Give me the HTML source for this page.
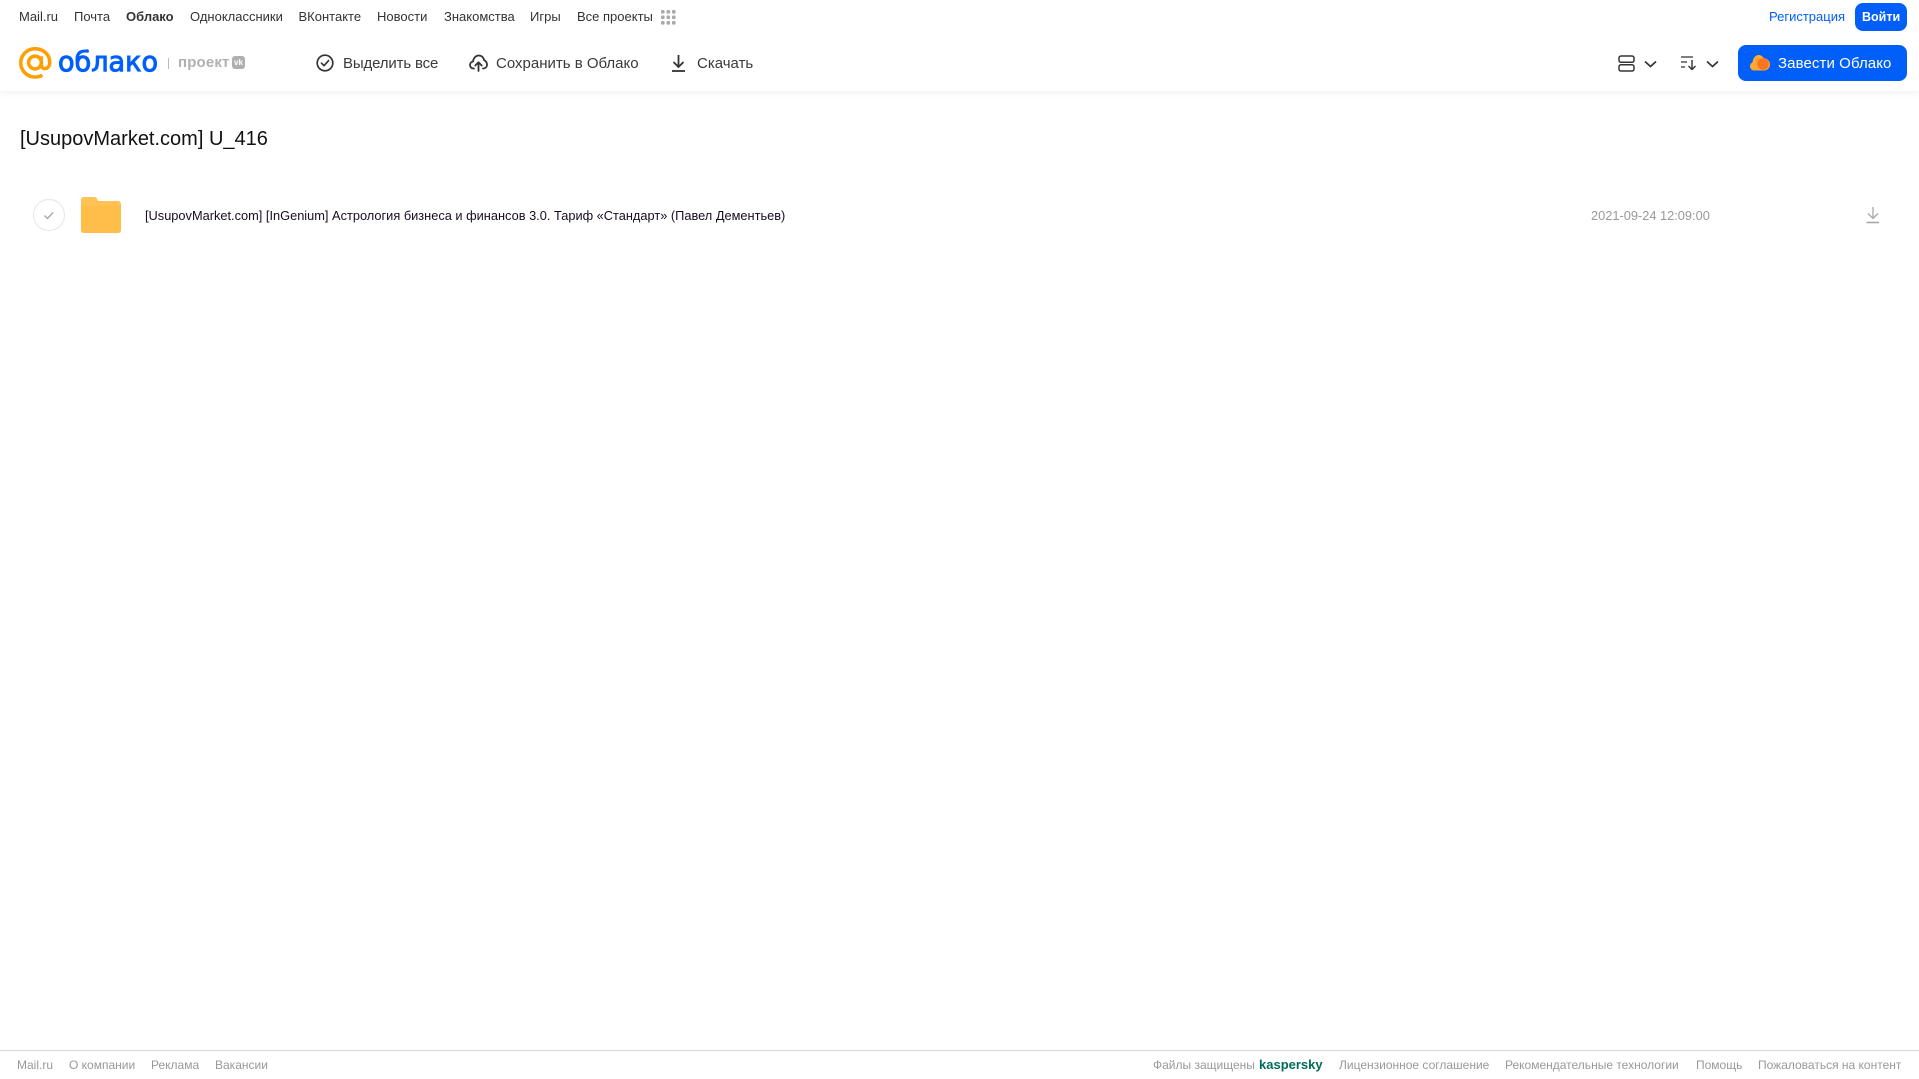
<!DOCTYPE html>
<html lang="ru"><head><meta charset="utf-8"><title>Облако</title>
<style>
html,body{margin:0;padding:0;background:#fff;width:1919px;height:1079px;overflow:hidden}
body{position:relative;font-family:"Liberation Sans","Noto Sans CJK SC",sans-serif}
.t{position:absolute;white-space:nowrap;line-height:20px;height:20px}
.n{top:7px;font-size:13px;color:#333}
.a{top:54px;font-size:15px;color:#3a3a3a}
.f{top:1055px;font-size:12px;color:#999}
svg{position:absolute;overflow:visible}
#hdr{position:absolute;left:0;top:0;width:1919px;height:91px;background:#fff;box-shadow:0 1px 8px rgba(0,0,0,.07)}
.btn{position:absolute;background:#005ff9;border-radius:8px}
</style></head><body>
<div id="hdr"></div>

<span class="t n" style="left:19px">Mail.ru</span>
<span class="t n" style="left:74px">Почта</span>
<span class="t n" style="left:126px;font-weight:700">Облако</span>
<span class="t n" style="left:190px">Одноклассники</span>
<span class="t n" style="left:298.500px">ВКонтакте</span>
<span class="t n" style="left:377px">Новости</span>
<span class="t n" style="left:444px">Знакомства</span>
<span class="t n" style="left:530px">Игры</span>
<span class="t n" style="left:577px">Все проекты</span>
<svg style="left:661px;top:10px" width="15" height="15" fill="#aaa"><rect x="0" y="0" width="3.6" height="3.6" rx="1"/><rect x="5.5" y="0" width="3.6" height="3.6" rx="1"/><rect x="11" y="0" width="3.6" height="3.6" rx="1"/><rect x="0" y="5.5" width="3.6" height="3.6" rx="1"/><rect x="5.5" y="5.5" width="3.6" height="3.6" rx="1"/><rect x="11" y="5.5" width="3.6" height="3.6" rx="1"/><rect x="0" y="11" width="3.6" height="3.6" rx="1"/><rect x="5.5" y="11" width="3.6" height="3.6" rx="1"/><rect x="11" y="11" width="3.6" height="3.6" rx="1"/></svg>

<span class="t n" style="left:1769px;color:#005ff9">Регистрация</span>
<div class="btn" style="left:1855px;top:3px;width:52px;height:28px"></div>
<span class="t n" style="left:1862px;color:#fff;font-weight:700;font-size:12.5px">Войти</span>

<!-- logo -->
<svg style="left:19px;top:47px" width="33" height="32" viewBox="0 0 34 33" fill="none" stroke="#ff9e00" stroke-width="3.6"><circle cx="16.5" cy="16" r="6.6"/><path d="M23 9.500v8.500c0 3 1.800 4.300 3.700 4.300 2.600 0 5-2.400 5-6.600C31.700 7.600 25 1.800 16.500 1.800 8.300 1.800 1.800 8.300 1.800 16.300c0 8.200 6.500 14.700 14.700 14.700 2.900 0 5.400-.7 7.600-2"/></svg>
<svg style="left:56px;top:42px" width="106" height="36"><text x="2" y="29" font-family="DejaVu Sans,sans-serif" font-size="28" fill="#005ff9" stroke="#005ff9" stroke-width="1" textLength="100" lengthAdjust="spacingAndGlyphs">облако</text></svg>
<div style="position:absolute;left:168px;top:58px;width:1px;height:11px;background:#bbb"></div>
<span class="t" style="left:178px;top:53px;font-size:15px;font-weight:700;color:#b0b0b0;letter-spacing:.15px">проект</span>
<div style="position:absolute;left:232px;top:56px;width:13px;height:13px;border-radius:3px;background:#b0b0b0;color:#fff;font-size:8px;font-weight:700;line-height:13px;text-align:center">vk</div>

<!-- actions -->
<svg style="left:316px;top:54px" width="18" height="18" fill="none" stroke="#333" stroke-width="1.7"><circle cx="9" cy="9" r="7.800"/><path d="M5.500 9.200l2.500 2.500 4.500-5" stroke-linecap="round" stroke-linejoin="round"/></svg>
<span class="t a" style="left:343px;letter-spacing:-.15px">Выделить все</span>
<svg style="left:469px;top:54px" width="19" height="18" fill="none" stroke="#333" stroke-width="1.800" stroke-linecap="round" stroke-linejoin="round"><path d="M5 14.500H4.500C2.500 14.500 1 13 1 11c0-1.800 1.300-3.200 3-3.500C4.500 4 6.800 1.500 9.700 1.500c2.800 0 5 2 5.500 4.800 1.600.4 2.800 2.400 2.800 4.400 0 2.200-1.600 3.800-3.800 3.800H14"/><path d="M9.500 17V9M6.300 11.500l3.200-3.200 3.200 3.200"/></svg>
<span class="t a" style="left:496px">Сохранить в Облако</span>
<svg style="left:671px;top:54px" width="15" height="18" fill="none" stroke="#333" stroke-width="1.800"><path d="M7.500 1v11.500M2.500 8l5 5 5-5"/><path d="M1 17h13"/></svg>
<span class="t a" style="left:697px">Скачать</span>

<!-- right controls -->
<svg style="left:1618px;top:55px" width="17" height="17" fill="none" stroke="#333" stroke-width="1.500"><rect x="1" y="1" width="15" height="6.300" rx="2"/><rect x="1" y="9.700" width="15" height="6.300" rx="2"/></svg>
<svg style="left:1643.500px;top:60px" width="13" height="8" fill="none" stroke="#333" stroke-width="1.700"><path d="M1 1.500l5.500 5 5.500-5"/></svg>
<svg style="left:1681px;top:55px" width="16" height="16" fill="none" stroke="#333" stroke-width="1.200"><path d="M0 2h12M0 7h6M0 12h4"/><path d="M11 5v9.500M7.500 11l3.500 3.500 3.500-3.500" stroke-width="1.400"/></svg>
<svg style="left:1705.500px;top:60px" width="13" height="8" fill="none" stroke="#333" stroke-width="1.700"><path d="M1 1.500l5.500 5 5.500-5"/></svg>
<div class="btn" style="left:1738px;top:45px;width:169px;height:36px"></div>
<svg style="left:1750px;top:54px" width="20" height="17"><path d="M4 16.500C1.800 16.500 0 14.700 0 12.300c0-1.800 1-3.300 2.500-3.900C2.800 4.500 5.300 1 8.500 1c2.300 0 4.300 1.200 5.300 3.300 3.400.1 6.200 2.800 6.200 6.100 0 3.400-2.700 6.100-6 6.100z" fill="#ffa930"/><circle cx="13" cy="10" r="5.800" fill="#ff6a1f" opacity=".85"/></svg>
<span class="t a" style="left:1778px;color:#fff;letter-spacing:.09px">Завести Облако</span>

<!-- content -->
<span class="t" style="left:20px;top:129px;font-size:20px;color:#111">[UsupovMarket.com] U_416</span>

<svg style="left:32px;top:198px" width="34" height="34" fill="none"><circle cx="17" cy="17" r="15.500" stroke="#eaeaea" stroke-width="1.200"/><path d="M12.500 17.500l3 3 5.500-6" stroke="#a8a8a8" stroke-width="1.400"/></svg>
<svg style="left:81px;top:197px" width="40" height="36"><path d="M3 0h10c1.500 0 2.500 .6 3.200 1.800L17.300 4H37c1.700 0 3 1.300 3 3v26c0 1.700-1.300 3-3 3H3c-1.700 0-3-1.300-3-3V3C0 1.300 1.300 0 3 0z" fill="#ffc355"/><path d="M0 8.500h40V33c0 1.700-1.300 3-3 3H3c-1.700 0-3-1.300-3-3z" fill="#ffbe4a"/></svg>
<span class="t" style="left:145px;top:206px;font-size:12.800px;color:#1a0a24">[UsupovMarket.com] [InGenium] Астрология бизнеса и финансов 3.0. Тариф «Стандарт» (Павел Дементьев)</span>
<span class="t" style="left:1591px;top:206px;font-size:12.800px;color:#999">2021-09-24 12:09:00</span>
<svg style="left:1866px;top:207px" width="14" height="17" fill="none" stroke="#a8a8a8" stroke-width="1.300"><path d="M7 0v11M2 6.500l5 5 5-5"/><path d="M0.500 15.500h12.500" stroke-width="1.600"/></svg>

<!-- footer -->
<div style="position:absolute;left:0;top:1050px;width:1919px;height:1px;background:#d9d9d9"></div>
<span class="t f" style="left:17px">Mail.ru</span>
<span class="t f" style="left:69px">О компании</span>
<span class="t f" style="left:151px">Реклама</span>
<span class="t f" style="left:215px">Вакансии</span>
<span class="t f" style="left:1153px">Файлы защищены</span>
<span class="t f" style="left:1259px;color:#006d5c;font-weight:700;font-size:13px">kaspersky</span>
<span class="t f" style="left:1339px">Лицензионное соглашение</span>
<span class="t f" style="left:1505px">Рекомендательные технологии</span>
<span class="t f" style="left:1696px">Помощь</span>
<span class="t f" style="left:1758px">Пожаловаться на контент</span>
</body></html>
